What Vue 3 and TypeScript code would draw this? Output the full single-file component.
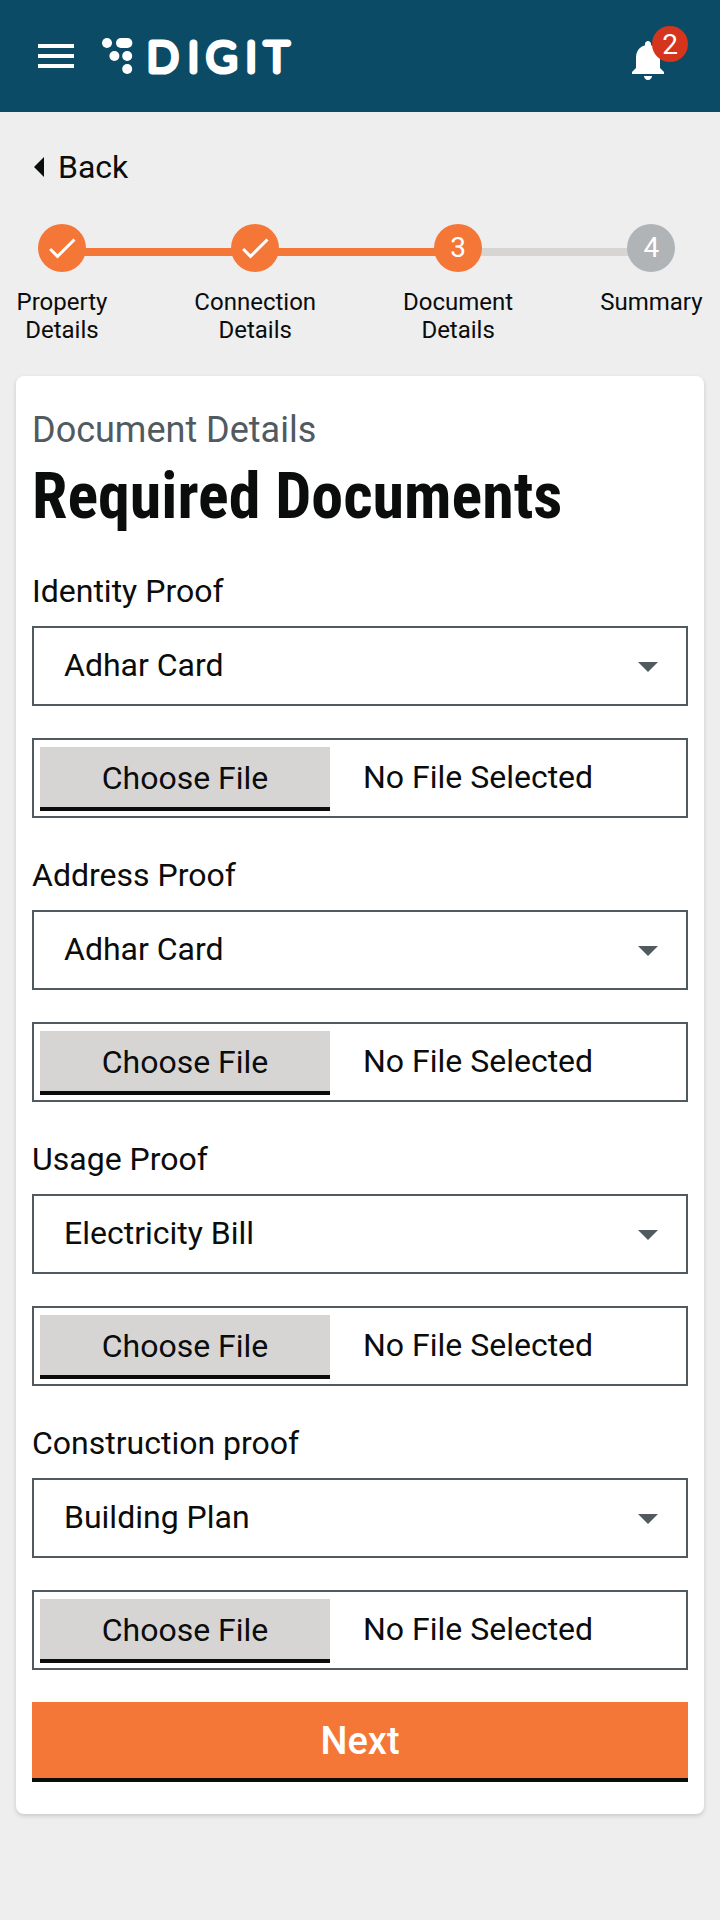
<script setup lang="ts">
interface Step {
  label: string[]
  state: 'done' | 'current' | 'todo'
}
interface DocumentField {
  label: string
  value: string
}

const steps: Step[] = [
  { label: ['Property', 'Details'], state: 'done' },
  { label: ['Connection', 'Details'], state: 'done' },
  { label: ['Document', 'Details'], state: 'current' },
  { label: ['Summary'], state: 'todo' },
]

const fields: DocumentField[] = [
  { label: 'Identity Proof', value: 'Adhar Card' },
  { label: 'Address Proof', value: 'Adhar Card' },
  { label: 'Usage Proof', value: 'Electricity Bill' },
  { label: 'Construction proof', value: 'Building Plan' },
]
</script>

<template>
  <div class="page">
    <header class="topbar">
      <button class="menu" aria-label="Menu">
        <span></span><span></span><span></span>
      </button>
      <svg class="logo" width="210" height="72" viewBox="100 20 210 72" role="img" aria-label="DIGIT">
        <g fill="#fff">
          <circle cx="107" cy="43" r="5" />
          <rect x="116" y="38" width="16.4" height="10" rx="5" />
          <circle cx="114.4" cy="56" r="5" />
          <circle cx="127.2" cy="56" r="5" />
          <circle cx="127.2" cy="69" r="5" />
        </g>
        <text class="wordmark" x="147.5 188.5 206.7 246.3 265.2" y="70.8">DIGIT</text>
      </svg>
      <button class="notify" aria-label="Notifications">
        <svg width="48" height="48" viewBox="0 0 24 24" fill="#fff">
          <path
            d="M12 22c1.1 0 2-.9 2-2h-4c0 1.1.89 2 2 2zm6-6v-5c0-3.07-1.64-5.64-4.5-6.32V4c0-.83-.67-1.5-1.5-1.5s-1.5.67-1.5 1.5v.68C7.63 5.36 6 7.92 6 11v5l-2 2v1h16v-1l-2-2z"
          />
        </svg>
        <span class="badge">2</span>
      </button>
    </header>

    <a class="back">
      <svg width="10" height="20" viewBox="0 0 10 20"><path d="M10 0v20L0 10z" fill="#0b0c0c" /></svg>
      <span>Back</span>
    </a>

    <nav class="stepper">
      <div class="track"><i class="filled"></i><i class="rest"></i></div>
      <div v-for="(step, i) in steps" :key="i" class="step">
        <span class="dot" :class="step.state">
          <svg v-if="step.state === 'done'" width="36" height="36" viewBox="0 0 24 24" fill="#fff">
            <path d="M9 16.2L4.8 12l-1.4 1.4L9 19 21 7l-1.4-1.4z" />
          </svg>
          <template v-else>{{ i + 1 }}</template>
        </span>
        <span v-for="line in step.label" :key="line" class="step-line">{{ line }}</span>
      </div>
    </nav>

    <main class="card">
      <p class="caption">Document Details</p>
      <h1>Required Documents</h1>

      <section v-for="field in fields" :key="field.label" class="field">
        <label>{{ field.label }}</label>
        <div class="select">
          <span>{{ field.value }}</span>
          <svg width="20" height="10" viewBox="0 0 20 10"><path d="M0 0h20L10 10z" fill="#505a5f" /></svg>
        </div>
        <div class="upload">
          <button class="choose">Choose File</button>
          <span>No File Selected</span>
        </div>
      </section>

      <button class="next">Next</button>
    </main>
  </div>
</template>

<style>
body {
  background: #eeeeee;
}
</style>

<style scoped>
.page {
  width: 720px;
  min-height: 1920px;
  background: #eeeeee;
  color: #0b0c0c;
  font-family: Roboto, sans-serif;
  font-size: 32px;
  line-height: 38px;
}
.page * {
  box-sizing: border-box;
}
button {
  border: 0;
  padding: 0;
  background: none;
  font: inherit;
  color: inherit;
}
.topbar {
  display: flex;
  align-items: center;
  height: 112px;
  padding: 0 48px 0 38px;
  background: #0b4b66;
}
.menu {
  display: grid;
  gap: 6px;
  width: 36px;
}
.menu span {
  height: 4px;
  background: #fff;
}
.logo {
  margin-left: 26px;
}
.wordmark {
  font-family: Lato, sans-serif;
  font-size: 40.2px;
  font-weight: 100;
  fill: #fff;
  stroke: #fff;
  stroke-width: 7.2px;
  stroke-linejoin: round;
}
.notify {
  position: relative;
  width: 48px;
  height: 48px;
  margin: 8px 0 0 auto;
}
.notify svg {
  display: block;
}
.badge {
  position: absolute;
  top: -10px;
  left: 28px;
  width: 36px;
  height: 36px;
  border-radius: 50%;
  background: #d4351c;
  color: #fff;
  font-size: 28px;
  line-height: 37px;
  text-align: center;
}
.back {
  display: flex;
  align-items: center;
  gap: 14px;
  margin: 36px 0 0 34px;
}
.stepper {
  position: relative;
  display: flex;
  justify-content: space-between;
  align-items: flex-start;
  height: 152px;
  margin-top: 38px;
  padding: 0 17.5px 0 16.5px;
}
.track {
  position: absolute;
  top: 24px;
  left: 62px;
  right: 68px;
  display: flex;
  height: 8px;
}
.filled {
  flex: 396;
  background: #f47738;
}
.rest {
  flex: 194;
  background: #d6d5d4;
}
.step {
  position: relative;
  display: flex;
  flex-direction: column;
  align-items: center;
  font-size: 24px;
  line-height: 28px;
}
.dot {
  display: flex;
  align-items: center;
  justify-content: center;
  width: 48px;
  height: 48px;
  margin-bottom: 16px;
  border-radius: 50%;
  background: #f47738;
  color: #fff;
  font-size: 28px;
  line-height: 34px;
}
.dot.todo {
  background: #b1b4b6;
}
.card {
  width: 688px;
  margin: 0 16px;
  padding: 32px 16px;
  border-radius: 8px;
  background: #fff;
  box-shadow: 0 2px 4px rgba(0, 0, 0, 0.16);
}
.caption {
  margin: 0;
  color: #505a5f;
  font-size: 36px;
  line-height: 44px;
}
h1 {
  margin: 8px 0 38px;
  font-family: 'Roboto Condensed', Roboto, sans-serif;
  font-stretch: condensed;
  font-size: 64px;
  font-weight: 700;
  line-height: 74px;
  white-space: nowrap;
}
.field + .field {
  margin-top: 38px;
}
.field label {
  display: block;
  margin-bottom: 16px;
}
.select,
.upload {
  display: flex;
  align-items: center;
  height: 80px;
  border: 2px solid #505a5f;
}
.select {
  justify-content: space-between;
  margin-bottom: 32px;
  padding: 0 28px 0 30px;
}
.select span,
.upload span {
  padding-bottom: 2px;
}
.select svg {
  margin-top: 2px;
}
.upload {
  padding: 2px 0 0 6px;
}
.upload span {
  margin: 0 0 2px 33px;
}
.choose {
  width: 290px;
  height: 64px;
  padding-top: 2px;
  border-bottom: 4px solid #0b0c0c;
  background: #d6d5d4;
}
.next {
  display: block;
  width: 100%;
  height: 80px;
  margin-top: 32px;
  padding-top: 2px;
  border-bottom: 4px solid #0b0c0c;
  background: #f47738;
  color: #fff;
  font-size: 38px;
  font-weight: 500;
}
</style>
